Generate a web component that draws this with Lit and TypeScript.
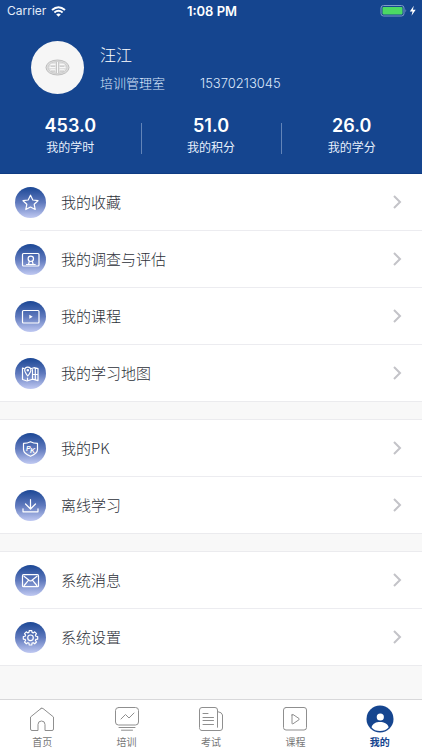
import { LitElement, html, css, svg, TemplateResult } from "lit";
import { customElement, property, state } from "lit/decorators.js";
import { classMap } from "lit/directives/class-map.js";

// The gear outline is a regular eight-tooth ring around the hub.
const gearOutline = (() => {
  const points: string[] = [];
  for (let i = 0; i < 8; i++) {
    for (const [offset, r] of [[-16, 5.6], [-10, 7.3], [10, 7.3], [16, 5.6]]) {
      const a = ((i * 45 + offset) * Math.PI) / 180;
      points.push(`${(15.5 + r * Math.sin(a)).toFixed(2)},${(15.8 - r * Math.cos(a)).toFixed(2)}`);
    }
  }
  return points.join(" ");
})();

const rowIcons: Record<string, TemplateResult> = {
  star: svg`<path d="M15.500 8.200l2.300 4.800 5.200.7-3.800 3.600 1 5.200-4.700-2.500-4.700 2.500 1-5.200L8 13.700l5.200-.7z"/>`,
  survey: svg`<rect x="7.500" y="9.500" width="16.500" height="12.500" rx="1"/><circle cx="15.800" cy="14.800" r="2.700"/><path d="M11.500 20.500h2l.8-3.200M20.200 20.500h-2l-.9-3.200M13.500 20.500h4.700"/>`,
  video: svg`<rect x="7.500" y="9.500" width="16.500" height="12.500" rx="1"/><path class="fill" d="M14.300 13.800v4l3.400-2z"/>`,
  map: svg`<path d="M9 10.500L7.500 10v11.500l4.500 1.500 5.500-1.800 5.500 1.500V10.700l-4-1-2.500.8M17.500 11.500v9.700M20.300 10.200v11.500M17.500 16.500h5.500M12.500 20v2.500"/><path d="M12.800 18c-1.900-2.500-3.100-4.100-3.100-5.800a3.100 3.100 0 0 1 6.200 0c0 1.700-1.200 3.300-3.100 5.800z"/><circle cx="12.800" cy="12.200" r=".7"/>`,
  pk: svg`<path d="M15.500 8.700c2.300 1.200 4.500 1.600 7 1.700v6.100c0 3.200-3.200 5.200-7 6.800-3.800-1.600-7-3.600-7-6.800v-6.100c2.500-.1 4.700-.5 7-1.700z"/><text x="11" y="18">P</text><text x="15" y="19.500">K</text>`,
  download: svg`<path d="M15.500 9.500v9M10.500 14l5 5 5-5M8 18.800v3h15v-3"/>`,
  mail: svg`<rect x="7.500" y="9.700" width="16" height="12" rx="1"/><path d="M9 11.200l5.300 4.300q1.200.9 2.400 0L22 11.200M9.200 20.500l4-4.800M21.800 20.500l-4-4.800"/>`,
  gear: svg`<polygon points=${gearOutline}/><circle cx="15.500" cy="15.800" r="2.800"/>`,
};

const tabIcons: Record<string, TemplateResult> = {
  home: svg`<path d="M13 2.500L2.500 11v12a1.500 1.500 0 0 0 1.500 1.500h6v-6a3.500 3.500 0 0 1 7 0v6h7a1.500 1.500 0 0 0 1.500-1.500V11L15 2.500q-1-.7-2 0z"/>`,
  train: svg`<rect x="2.500" y="1.500" width="23" height="17.500" rx="3"/><path d="M8 13l4.500-4.500 3.500 3.500 5-5M6 21.500h16M8.500 24.200h11"/>`,
  exam: svg`<path d="M20.500 21V4a2.500 2.500 0 0 0-2.500-2.500H5A2.500 2.500 0 0 0 2.500 4v17.500A2.500 2.500 0 0 0 5 24.500h18a2.500 2.500 0 0 0 2.500-2.500V9q0-2.500-5-3.500M20.500 17v4M6 7.500h5M6 11.500h10.500M6 14.500h10.500M6 18.500h10.500"/>`,
  course: svg`<rect x="2.500" y="1.500" width="23" height="22.500" rx="2.500"/><path d="M11 9v8.300q0 1 1 .5l6-4.100q.8-.6 0-1.200l-6-4q-1-.5-1 .5z"/>`,
  mine: svg`<circle class="solid" cx="14" cy="13" r="13.500"/><circle class="blank" cx="14.300" cy="11" r="3.600"/><path class="blank" d="M5.500 21.200C7 17.300 10 16 14 16s7.500 1.400 8.700 5.200C20.500 24 17.500 25 14 25s-6.500-1-8.500-3.800z"/>`,
};

@customElement("menu-row")
class MenuRow extends LitElement {
  @property() icon = "";
  @property() label = "";

  static styles = css`
    :host { display: block; }
    .row {
      display: flex; align-items: center; gap: 15px; width: 100%; height: 56px;
      padding: 0 20px 0 15px; border: 0; background: none; cursor: pointer;
      color: #2c3038; text-align: left;
      font: 300 15px/22px "Noto Sans CJK SC", sans-serif;
    }
    .disc {
      flex: none; width: 31px; height: 31px; border-radius: 50%;
      background: linear-gradient(#1b4795, #5f79bd 50%, #c0c9f2);
    }
    .disc svg { display: block; fill: none; stroke: #fff; stroke-width: 1.2; stroke-linejoin: round; stroke-linecap: round; }
    .disc .fill { fill: #fff; stroke: none; }
    .disc text { fill: #fff; stroke: none; font: italic 700 7px "Liberation Sans", sans-serif; }
    .label { flex: 1; }
    .chevron { flex: none; fill: none; stroke: #c3c3c8; stroke-width: 2; }
  `;

  render() {
    return html`<button class="row">
      <span class="disc"><svg width="31" height="31" viewBox="0 0 31 31" aria-hidden="true">${rowIcons[this.icon]}</svg></span>
      <span class="label">${this.label}</span>
      <svg class="chevron" width="10" height="14" viewBox="0 0 10 14" aria-hidden="true"><path d="M2 1l6 6-6 6"/></svg>
    </button>`;
  }
}

@customElement("app-root")
class AppRoot extends LitElement {
  @state() private tab = "mine";

  private stats = [
    { value: "453.0", label: "我的学时" },
    { value: "51.0", label: "我的积分" },
    { value: "26.0", label: "我的学分" },
  ];

  private groups = [
    [["star", "我的收藏"], ["survey", "我的调查与评估"], ["video", "我的课程"], ["map", "我的学习地图"]],
    [["pk", "我的PK"], ["download", "离线学习"]],
    [["mail", "系统消息"], ["gear", "系统设置"]],
  ];

  private tabs = [["home", "首页"], ["train", "培训"], ["exam", "考试"], ["course", "课程"], ["mine", "我的"]];

  static styles = css`
    :host {
      display: flex; flex-direction: column; min-height: 100vh;
      background: #f8f8f8; font-family: Inter, "Noto Sans CJK SC", sans-serif;
    }
    .header { background: #15458f; color: #fff; padding-bottom: 15px; border-bottom: 1px solid #0f3c83; }
    .status {
      display: grid; grid-template-columns: 1fr auto 1fr; align-items: center;
      height: 22px; padding: 0 5px 0 7px; font-size: 12px; line-height: 22px;
    }
    .carrier { display: flex; align-items: center; gap: 5px; color: #e4ecf8; }
    .time { font-weight: 600; font-size: 13px; }
    .power { justify-self: end; }
    .status svg { display: block; }
    .profile { display: flex; align-items: center; gap: 16px; padding: 19px 31px 0; }
    .avatar { flex: none; width: 53px; height: 53px; border-radius: 50%; background: #f6f6f6; }
    .avatar svg { display: block; }
    .name { margin: 0; font: 300 16px/22px "Noto Sans CJK SC", sans-serif; }
    .meta {
      display: flex; gap: 35px; margin: 8px 0 0; color: #dce8fb;
      font-size: 13px; line-height: 20px; font-weight: 300;
    }
    .stats { display: grid; grid-template-columns: repeat(3, 1fr); margin: 20px 0 0; }
    .stat { display: flex; flex-direction: column-reverse; align-items: center; position: relative; }
    .stat + .stat::before {
      content: ""; position: absolute; left: 0; top: 9px; bottom: 4px; width: 1px; background: #6284b8;
    }
    .stat dt { font-size: 12px; line-height: 20px; color: #e6effc; }
    .stat dd { margin: 0; font-size: 18px; line-height: 24px; font-weight: 600; }
    .groups { flex: 1; display: flex; flex-direction: column; gap: 17px; }
    .group {
      margin: 0; padding: 0; list-style: none; background: #fff;
      border-bottom: 1px solid #ebebee;
    }
    .group + .group { border-top: 1px solid #ebebee; }
    .item + .item { background: linear-gradient(#ececf0, #ececf0) 20px 0 / 100% 1px no-repeat; padding-top: 1px; }
    .tabs {
      position: sticky; bottom: 0; display: grid; grid-template-columns: repeat(5, 1fr);
      height: 50px; background: #fff; border-top: 1px solid #d8d8da;
    }
    .tab {
      display: flex; flex-direction: column; align-items: center; gap: 2px; padding: 6px 0 0;
      border: 0; background: none; color: #777; cursor: pointer;
      font: 400 10px/16px "Noto Sans CJK SC", sans-serif;
    }
    .tab svg { fill: none; stroke: #8f8f8f; stroke-linejoin: round; stroke-linecap: round; overflow: visible; }
    .tab .solid { fill: #15458f; stroke: none; }
    .tab .blank { fill: #fff; stroke: none; }
    .tab.active { color: #15458f; font-weight: 700; }
  `;

  render() {
    return html`
      <header class="header">
        <div class="status">
          <span class="carrier">Carrier
            <svg width="15" height="11" viewBox="0 0 15 11" fill="none" stroke="#fff" stroke-width="2" aria-hidden="true">
              <path d="M1 4q6.500-5.600 13 0M3.400 6.500q4.100-3.400 8.200 0"/><path fill="#fff" stroke="none" d="M5.200 8.400q2.300-1.800 4.600 0L7.500 10.800z"/>
            </svg>
          </span>
          <span class="time">1:08 PM</span>
          <svg class="power" width="37" height="12" viewBox="0 0 37 12" aria-hidden="true">
            <rect x="1" y=".5" width="23" height="10.500" rx="2.500" fill="none" stroke="#7d9bc7"/>
            <rect x="2.500" y="2" width="20" height="7.500" rx="1" fill="#4cd964"/>
            <path d="M25.500 4q1.500 1.700 0 3.500z" fill="#7d9bc7"/>
            <path d="M33.800.8L29.800 6.500h2.700l-1 4.200 4.200-6h-2.800z" fill="#fff"/>
          </svg>
        </div>
        <section class="profile">
          <div class="avatar">
            <svg width="53" height="53" viewBox="0 0 53 53" fill="none" stroke="#bdbdbd" aria-hidden="true">
              <ellipse cx="26.500" cy="26.500" rx="11.500" ry="7.500" fill="#dedede"/>
              <ellipse cx="26.500" cy="26.500" rx="9.500" ry="6" stroke="#cecece"/>
              <path stroke="#f8f8f8" stroke-width="1.300" d="M26.500 21v11M24.500 23.500h-5M24.500 29h-5M18.500 26.300h6M28.500 23.500h5M28.500 29h5M28.500 26.300h6"/>
              <path stroke="#b4b4b4" stroke-width=".6" d="M25.500 21v11M27.600 21v11M20 25.200h4M29 25.200h4M20 30h4M29 30h4"/>
            </svg>
          </div>
          <div>
            <h1 class="name">汪江</h1>
            <p class="meta"><span>培训管理室</span><span>15370213045</span></p>
          </div>
        </section>
        <dl class="stats">
          ${this.stats.map((s) => html`<div class="stat"><dt>${s.label}</dt><dd>${s.value}</dd></div>`)}
        </dl>
      </header>
      <main class="groups">
        ${this.groups.map((g) => html`<ul class="group">
          ${g.map(([icon, label]) => html`<li class="item"><menu-row icon=${icon} label=${label}></menu-row></li>`)}
        </ul>`)}
      </main>
      <nav class="tabs">
        ${this.tabs.map(([id, label]) => html`<button
          class=${classMap({ tab: true, active: this.tab === id })}
          @click=${() => (this.tab = id)}>
          <svg width="28" height="26" viewBox="0 0 28 26" aria-hidden="true">${tabIcons[id]}</svg>
          <span>${label}</span>
        </button>`)}
      </nav>
    `;
  }
}
